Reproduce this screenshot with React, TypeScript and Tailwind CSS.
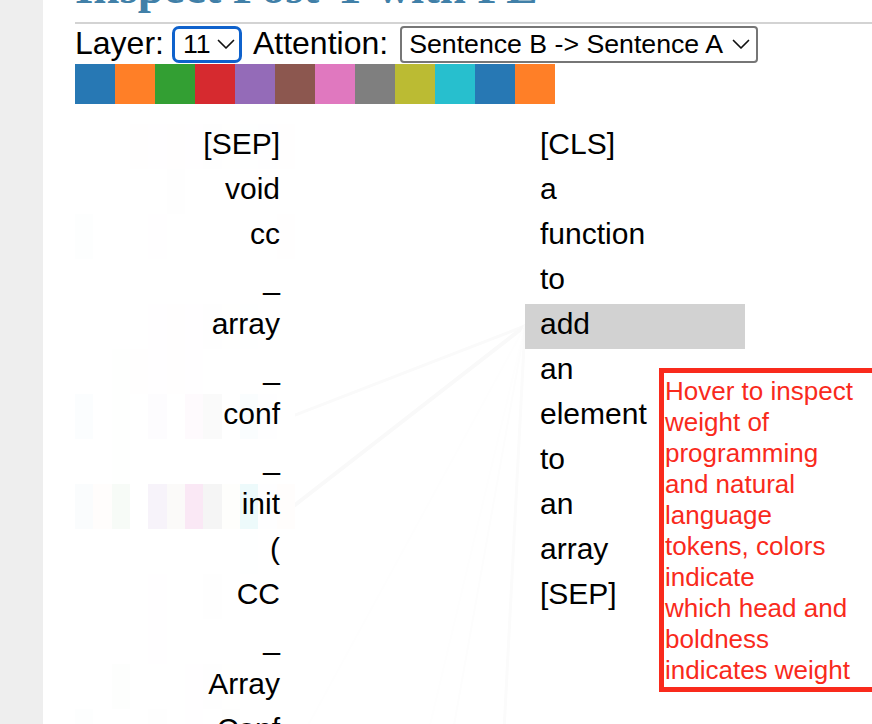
import React from 'react';

const PALETTE = ['#1f77b4', '#ff7f0e', '#2ca02c', '#d62728', '#9467bd', '#8c564b', '#e377c2', '#7f7f7f', '#bcbd22', '#17becf', '#1f77b4', '#ff7f0e'];
const LEGEND = ['#2778b4', '#ff7f27', '#339f33', '#d62a2f', '#946bb8', '#8c574f', '#e078bf', '#7f7f7f', '#bbbb33', '#27bfce', '#2778b4', '#ff7f27'];

const LEFT_TOKENS = ['[SEP]', 'void', 'cc', '_', 'array', '_', 'conf', '_', 'init', '(', 'CC', '_', 'Array', 'Conf'];
const RIGHT_TOKENS = ['[CLS]', 'a', 'function', 'to', 'add', 'an', 'element', 'to', 'an', 'array', '[SEP]'];

// per-head attention weight of each left token, most are close to nothing
const WEIGHTS: number[][] = [
  [0, 0, 0, 0.003, 0.003, 0.003, 0.003, 0.003, 0.003, 0.003, 0.003, 0.003],
  [0, 0, 0, 0, 0, 0.006, 0, 0, 0, 0, 0, 0],
  [0.008, 0, 0, 0, 0.005, 0, 0, 0, 0, 0, 0, 0.003],
  [0, 0, 0, 0, 0, 0, 0, 0, 0, 0, 0, 0],
  [0, 0, 0, 0, 0.003, 0.003, 0.003, 0.003, 0.003, 0.003, 0, 0],
  [0, 0, 0.003, 0.003, 0.003, 0.003, 0.003, 0, 0, 0, 0, 0],
  [0.015, 0, 0.003, 0, 0.02, 0, 0.04, 0.04, 0, 0.025, 0.004, 0],
  [0, 0, 0.005, 0, 0, 0, 0, 0, 0, 0, 0, 0],
  [0.025, 0.01, 0.04, 0, 0.08, 0.03, 0.17, 0.08, 0.012, 0.08, 0.005, 0.012],
  [0, 0, 0, 0, 0, 0, 0, 0, 0, 0.003, 0, 0],
  [0, 0, 0, 0, 0.005, 0, 0, 0.005, 0, 0, 0, 0],
  [0, 0, 0, 0, 0.005, 0, 0, 0, 0, 0, 0, 0],
  [0, 0, 0.008, 0, 0, 0, 0.006, 0.003, 0.003, 0, 0, 0],
  [0.006, 0, 0, 0, 0.006, 0, 0.006, 0, 0.006, 0, 0, 0],
];

const Chevron = () => (
  <svg width="18" height="11" viewBox="0 0 18 11" fill="none" stroke="#111" strokeWidth="1.7" strokeLinecap="round" strokeLinejoin="round">
    <path d="M1.5 1.5 L9 9 L16.5 1.5" />
  </svg>
);

export default function App() {
  return (
    <div className="flex h-[724px] w-[872px] overflow-hidden bg-white text-black font-['Liberation_Sans',Arial,sans-serif] relative">
      <aside className="w-[43px] shrink-0 bg-[#eeeeee]" />

      <main className="flex-1 pl-8 min-w-0">
        {/* Page heading, cut off by the top of the window */}
        <h1 className="-mt-[40px] h-[62px] whitespace-nowrap font-['Liberation_Serif',serif] text-[47px] leading-[55px] font-bold text-[#4180a8]">
          Inspect Post-T with PL
        </h1>
        <div className="h-[2px] bg-[#d3d3d3]" />

        {/* Controls */}
        <div className="flex h-10 items-start pt-[2px] text-[32px] leading-[35px]">
          <span>Layer:</span>
          <div className="ml-[8px] flex h-[37px] w-[70px] items-center justify-between rounded-[7px] border-[3px] border-[#0f62cc] pl-[8px] pr-[4px] text-[26.7px]">
            <span>11</span>
            <Chevron />
          </div>
          <span className="ml-[11px]">Attention:</span>
          <div className="ml-[12px] flex h-[37px] w-[358px] items-center justify-between rounded-[4px] border-2 border-[#767676] pl-[7px] pr-[6px] text-[26.7px] leading-[33px]">
            <span className="whitespace-nowrap">Sentence B -&gt; Sentence A</span>
            <Chevron />
          </div>
        </div>

        {/* Head colour legend */}
        <div className="flex">
          {LEGEND.map((color, i) => (
            <div key={i} className="h-10 w-10" style={{ backgroundColor: color }} />
          ))}
        </div>

        {/* Attention view */}
        <div className="mt-5 flex text-[30px] leading-[45px]">
          <div className="w-[220px] shrink-0">
            {LEFT_TOKENS.map((token, r) => (
              <div key={r} className="relative h-[45px] pr-[15px] text-right">
                <div className="absolute inset-0 grid grid-cols-12">
                  {WEIGHTS[r].map((w, c) => (
                    <div key={c} style={{ backgroundColor: PALETTE[c], opacity: w }} />
                  ))}
                </div>
                <span className="relative -top-[3px]">{token}</span>
              </div>
            ))}
          </div>

          <div className="relative w-[230px] shrink-0">
            <svg className="absolute left-0 top-0" width="230" height="620" fill="none" strokeLinecap="round">
              <path d="M0 291 L230 202" stroke="#fafafa" strokeWidth="3" />
              <path d="M0 381 L230 202" stroke="#f9f9f9" strokeWidth="4" />
              <path d="M10 607 L230 202" stroke="#fefefe" strokeWidth="2" />
              <path d="M133.6 607 L230 202" stroke="#fefefe" strokeWidth="2" />
              <path d="M158 607 L230 202" stroke="#fdfdfd" strokeWidth="2" />
              <path d="M209 607 L230 202" stroke="#fbfbfb" strokeWidth="3" />
            </svg>
          </div>

          <div className="w-[220px] shrink-0">
            {RIGHT_TOKENS.map((token, r) => (
              <div key={r} className={`h-[45px] pl-[15px] ${token === 'add' ? 'bg-[#d2d2d2]' : ''}`}>
                <span className="relative -top-[3px]">{token}</span>
              </div>
            ))}
          </div>
        </div>
      </main>

      {/* Hover hint */}
      <div className="absolute left-[659px] top-[368px] w-[240px] border-[5px] border-[#f92a1c] pb-[1px] pl-[1px] pt-[3px] text-[26px] leading-[31px] text-[#f92a1c]">
        Hover to inspect
        <br />
        weight of
        <br />
        programming
        <br />
        and natural
        <br />
        language
        <br />
        tokens, colors
        <br />
        indicate
        <br />
        which head and
        <br />
        boldness
        <br />
        indicates weight
      </div>
    </div>
  );
}
